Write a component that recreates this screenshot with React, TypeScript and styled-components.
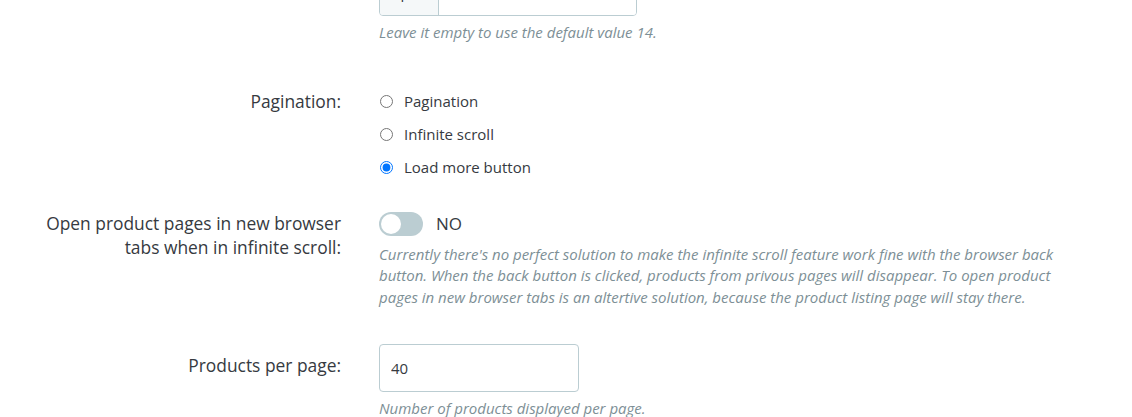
import styled, { createGlobalStyle } from "styled-components";

const GlobalStyle = createGlobalStyle`
  body {
    margin: 0;
    background: #ffffff;
    font-family: "Open Sans", "Noto Sans", sans-serif;
    color: #363a41;
    overflow: hidden;
  }
`;

const Form = styled.form`
  margin-top: -32px;
`;

const Row = styled.div<{ $top: number }>`
  display: grid;
  grid-template-columns: 300px 1fr;
  column-gap: 38px;
  margin-left: 41px;
  margin-top: ${(p) => p.$top}px;
`;

const Label = styled.label<{ $pad?: number; $lh?: number }>`
  text-align: right;
  font-size: 17.4px;
  line-height: ${(p) => p.$lh ?? 24}px;
  padding-top: ${(p) => p.$pad ?? 0}px;
  color: #363a41;
`;

const Control = styled.div`
  display: flex;
  flex-direction: column;
  align-items: flex-start;
`;

const Help = styled.p<{ $top?: number }>`
  margin: ${(p) => p.$top ?? 6}px 0 0;
  max-width: 680px;
  font-size: 15px;
  line-height: 21.7px;
  font-style: italic;
  color: #7d8f96;
`;

const InputGroup = styled.div`
  display: flex;
  width: 258px;
  height: 48px;
  border: 1px solid #bbcdd2;
  border-radius: 4px;
  box-sizing: border-box;
  overflow: hidden;
`;

const Addon = styled.span`
  width: 58px;
  display: flex;
  align-items: center;
  justify-content: center;
  background: #f5f8f9;
  border-right: 1px solid #bbcdd2;
  font-size: 15px;
  color: #363a41;
`;

const TextInput = styled.input<{ $width?: number }>`
  width: ${(p) => (p.$width ? `${p.$width}px` : "auto")};
  flex: ${(p) => (p.$width ? "none" : "1")};
  min-width: 0;
  height: 48px;
  box-sizing: border-box;
  padding: 0 11px;
  border: ${(p) => (p.$width ? "1px solid #bbcdd2" : "none")};
  border-radius: ${(p) => (p.$width ? "4px" : "0")};
  font-family: "Open Sans", "Noto Sans", sans-serif;
  font-size: 15px;
  color: #363a41;
  background: #ffffff;
  outline: none;
`;

const RadioList = styled.div`
  display: flex;
  flex-direction: column;
`;

const RadioOption = styled.label`
  display: flex;
  align-items: center;
  gap: 11px;
  height: 33px;
  font-size: 15px;
  color: #363a41;
  cursor: pointer;

  input {
    margin: 0 0 0 1px;
    width: 13px;
    height: 13px;
  }
`;

const SwitchRow = styled.div`
  display: flex;
  align-items: center;
  gap: 13px;
  height: 24px;
  margin-top: 1px;
`;

const SwitchTrack = styled.span<{ $on: boolean }>`
  position: relative;
  display: inline-block;
  width: 44px;
  height: 24px;
  border-radius: 12px;
  background: ${(p) => (p.$on ? "#25b9d7" : "#bbcdd2")};

  &::after {
    content: "";
    position: absolute;
    top: 2px;
    left: ${(p) => (p.$on ? "22px" : "2px")};
    width: 20px;
    height: 20px;
    border-radius: 50%;
    background: #ffffff;
  }
`;

const SwitchText = styled.span`
  font-size: 17px;
  color: #363a41;
`;

const paginationOptions = ["Pagination", "Infinite scroll", "Load more button"];

const App = () => {
  return (
    <>
      <GlobalStyle />
      <Form onSubmit={(e) => e.preventDefault()}>
        <Row $top={0}>
          <Label $pad={9}>Margin between listing images:</Label>
          <Control>
            <InputGroup>
              <Addon>px</Addon>
              <TextInput type="text" defaultValue="" />
            </InputGroup>
            <Help>Leave it empty to use the default value 14.</Help>
          </Control>
        </Row>

        <Row $top={41}>
          <Label $lh={33}>Pagination:</Label>
          <Control>
            <RadioList>
              {paginationOptions.map((opt, i) => (
                <RadioOption key={opt}>
                  <input
                    type="radio"
                    name="pagination"
                    defaultChecked={i === 2}
                  />
                  {opt}
                </RadioOption>
              ))}
            </RadioList>
          </Control>
        </Row>

        <Row $top={27}>
          <Label>
            Open product pages in new browser tabs when in infinite scroll:
          </Label>
          <Control>
            <SwitchRow>
              <SwitchTrack $on={false} />
              <SwitchText>NO</SwitchText>
            </SwitchRow>
            <Help $top={8}>
              Currently there's no perfect solution to make the infinite scroll
              feature work fine with the browser back button. When the back
              button is clicked, products from privous pages will disappear. To
              open product pages in new browser tabs is an altertive solution,
              because the product listing page will stay there.
            </Help>
          </Control>
        </Row>

        <Row $top={35}>
          <Label $pad={9}>Products per page:</Label>
          <Control>
            <TextInput type="text" $width={200} defaultValue="40" />
            <Help>Number of products displayed per page.</Help>
          </Control>
        </Row>
      </Form>
    </>
  );
};

export default App;
